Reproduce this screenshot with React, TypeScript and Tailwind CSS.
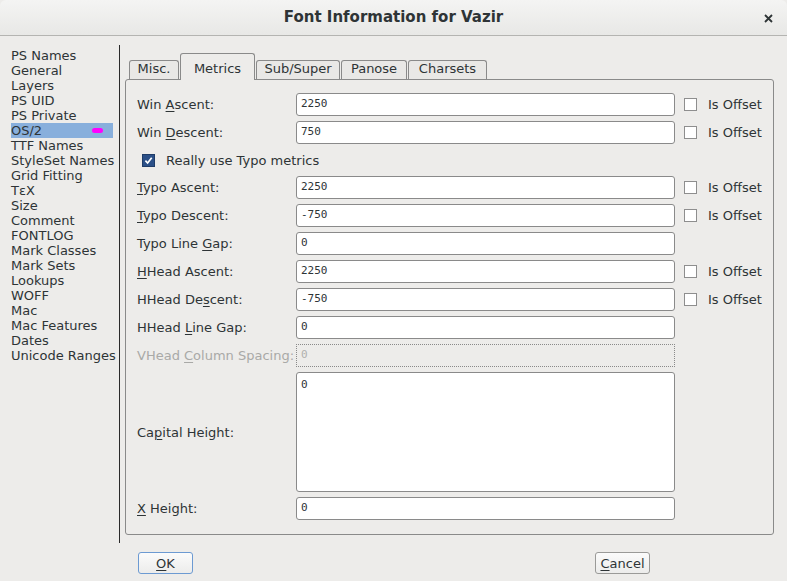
import React from "react";

const U = ({ children }: { children: React.ReactNode }) => (
  <span className="underline decoration-1 underline-offset-[2px]">{children}</span>
);

const Box = ({ checked }: { checked?: boolean }) =>
  checked ? (
    <div className="w-[13px] h-[13px] shrink-0 bg-[#2b5088] border border-[#1f3c68] flex items-center justify-center">
      <svg width="9" height="9" viewBox="0 0 9 9">
        <path d="M1.4 4.7 L3.6 7 L7.7 1.7" stroke="white" strokeWidth="1.7" fill="none" />
      </svg>
    </div>
  ) : (
    <div className="w-[13px] h-[13px] shrink-0 bg-white border border-[#8e8e8e]" />
  );

const labelCls = "w-[159px] shrink-0 text-[13px] leading-[15px] text-[#2e3436] whitespace-nowrap";
const inputCls =
  "w-[379px] h-[23px] shrink-0 bg-white border border-[#8a8a8a] rounded-[3px] pl-[4px] flex items-center font-['DejaVu_Sans_Mono',monospace] text-[11px] text-[#2e3436]";

const Row = ({
  label,
  value,
  offset,
  extra = "",
}: {
  label: React.ReactNode;
  value: string;
  offset?: boolean;
  extra?: string;
}) => (
  <div className={"flex items-center h-[23px] " + extra}>
    <div className={labelCls}>{label}</div>
    <div className={inputCls}>{value}</div>
    {offset && (
      <div className="flex items-center ml-[9px]">
        <Box />
        <span className="ml-[11px] text-[13px] leading-[15px] text-[#2e3436]">Is Offset</span>
      </div>
    )}
  </div>
);

const listItems = [
  "PS Names",
  "General",
  "Layers",
  "PS UID",
  "PS Private",
  "OS/2",
  "TTF Names",
  "StyleSet Names",
  "Grid Fitting",
  "TεX",
  "Size",
  "Comment",
  "FONTLOG",
  "Mark Classes",
  "Mark Sets",
  "Lookups",
  "WOFF",
  "Mac",
  "Mac Features",
  "Dates",
  "Unicode Ranges",
];

const tabs = [
  { name: "Misc.", w: "w-[50px]" },
  { name: "Metrics", w: "w-[75px]", sel: true },
  { name: "Sub/Super", w: "w-[84px]" },
  { name: "Panose", w: "w-[66px]" },
  { name: "Charsets", w: "w-[79px]" },
];

export default function App() {
  return (
    <div className="w-[787px] h-[581px] bg-[#edecea] flex flex-col font-['DejaVu_Sans',sans-serif] text-[#2e3436] overflow-hidden">
      {/* Title bar */}
      <div className="relative h-[36px] shrink-0 flex items-center justify-center bg-gradient-to-b from-[#f4f4f3] to-[#e8e8e6] border-b border-[#b4b4b1] rounded-t-[6px]">
        <span className="font-bold text-[15px] text-[#2e3436]">Font Information for Vazir</span>
        <div className="absolute right-[14px] top-[14px]">
          <svg width="9" height="9" viewBox="0 0 9 9">
            <path d="M1 1 L8 8 M8 1 L1 8" stroke="#2e3436" strokeWidth="1.8" />
          </svg>
        </div>
      </div>

      {/* Main */}
      <div className="flex h-[507px] shrink-0">
        <div className="w-[120px] shrink-0 mt-[9px] h-[498px] border-r border-[#2a2a2a] pt-[3px]">
          <div className="ml-[11px] w-[102px] flex flex-col">
            {listItems.map((it) => (
              <div
                key={it}
                className={
                  "relative h-[15px] text-[13px] leading-[15px] whitespace-nowrap " +
                  (it === "OS/2" ? "bg-[#88afdc]" : "")
                }
              >
                {it}
                {it === "OS/2" && (
                  <div className="absolute left-[81px] top-[5px] w-[11px] h-[5px] rounded-full bg-[#ff00ff]" />
                )}
              </div>
            ))}
          </div>
        </div>

        <div className="flex flex-col pl-[5px] pt-[17px]">
          {/* Tabs */}
          <div className="flex items-end gap-[1px] pl-[4px] h-[26px] relative z-10">
            {tabs.map((t) =>
              t.sel ? (
                <div
                  key={t.name}
                  className={`${t.w} h-[27px] mb-[-1px] bg-[#edecea] border border-b-0 border-[#8a8a8a] rounded-t-[3px] flex items-end justify-center pb-[4px] text-[13px] leading-[15px]`}
                >
                  {t.name}
                </div>
              ) : (
                <div
                  key={t.name}
                  className={`${t.w} h-[19px] bg-[#e9e8e6] border border-b-0 border-[#8a8a8a] rounded-t-[3px] flex items-end justify-center pb-[3px] text-[13px] leading-[15px]`}
                >
                  {t.name}
                </div>
              )
            )}
          </div>

          {/* Panel */}
          <div className="w-[649px] h-[456px] border border-[#8a8a8a] rounded-[3px] pt-[13px] pl-[11px] flex flex-col gap-[5px]">
            <Row label={<>Win <U>A</U>scent:</>} value="2250" offset />
            <Row label={<>Win <U>D</U>escent:</>} value="750" offset />
            <div className="flex items-center h-[22px] pl-[5px]">
              <Box checked />
              <span className="ml-[11px] text-[13px] leading-[15px]">Really use Typo metrics</span>
            </div>
            <Row label={<><U>T</U>ypo Ascent:</>} value="2250" offset />
            <Row label={<><U>T</U>ypo Descent:</>} value="-750" offset />
            <Row label={<>Typo Line <U>G</U>ap:</>} value="0" />
            <Row label={<><U>H</U>Head Ascent:</>} value="2250" offset />
            <Row label={<>HHead De<U>s</U>cent:</>} value="-750" offset />
            <Row label={<>HHead <U>L</U>ine Gap:</>} value="0" />
            <div className="flex items-center h-[23px]">
              <div className={labelCls + " !text-[#a9a9a7]"}>
                VHead <U>C</U>olumn Spacing:
              </div>
              <div className="w-[379px] h-[23px] shrink-0 border border-dotted border-[#8a8a8a] pl-[4px] flex items-center font-['DejaVu_Sans_Mono',monospace] text-[11px] text-[#b0b0ae]">
                0
              </div>
            </div>
            <div className="flex items-center h-[120px]">
              <div className={labelCls}>
                Ca<U>p</U>ital Height:
              </div>
              <div className="w-[379px] h-[120px] shrink-0 bg-white border border-[#8a8a8a] rounded-[3px] pl-[4px] pt-[4px] font-['DejaVu_Sans_Mono',monospace] text-[11px] leading-[15px]">
                0
              </div>
            </div>
            <Row label={<><U>X</U> Height:</>} value="0" />
          </div>
        </div>
      </div>

      {/* Buttons */}
      <div className="flex justify-between ml-[138px] w-[512px] mt-[9px]">
        <div className="w-[55px] h-[22px] border border-[#6c9ad2] rounded-[3px] bg-gradient-to-b from-[#fbfbfb] to-[#ececeb] flex items-center justify-center text-[13px] leading-[15px]">
          <U>O</U>K
        </div>
        <div className="w-[55px] h-[22px] border border-[#9a9a98] rounded-[3px] bg-gradient-to-b from-[#fbfbfb] to-[#ececeb] flex items-center justify-center text-[13px] leading-[15px]">
          <U>C</U>ancel
        </div>
      </div>
    </div>
  );
}
